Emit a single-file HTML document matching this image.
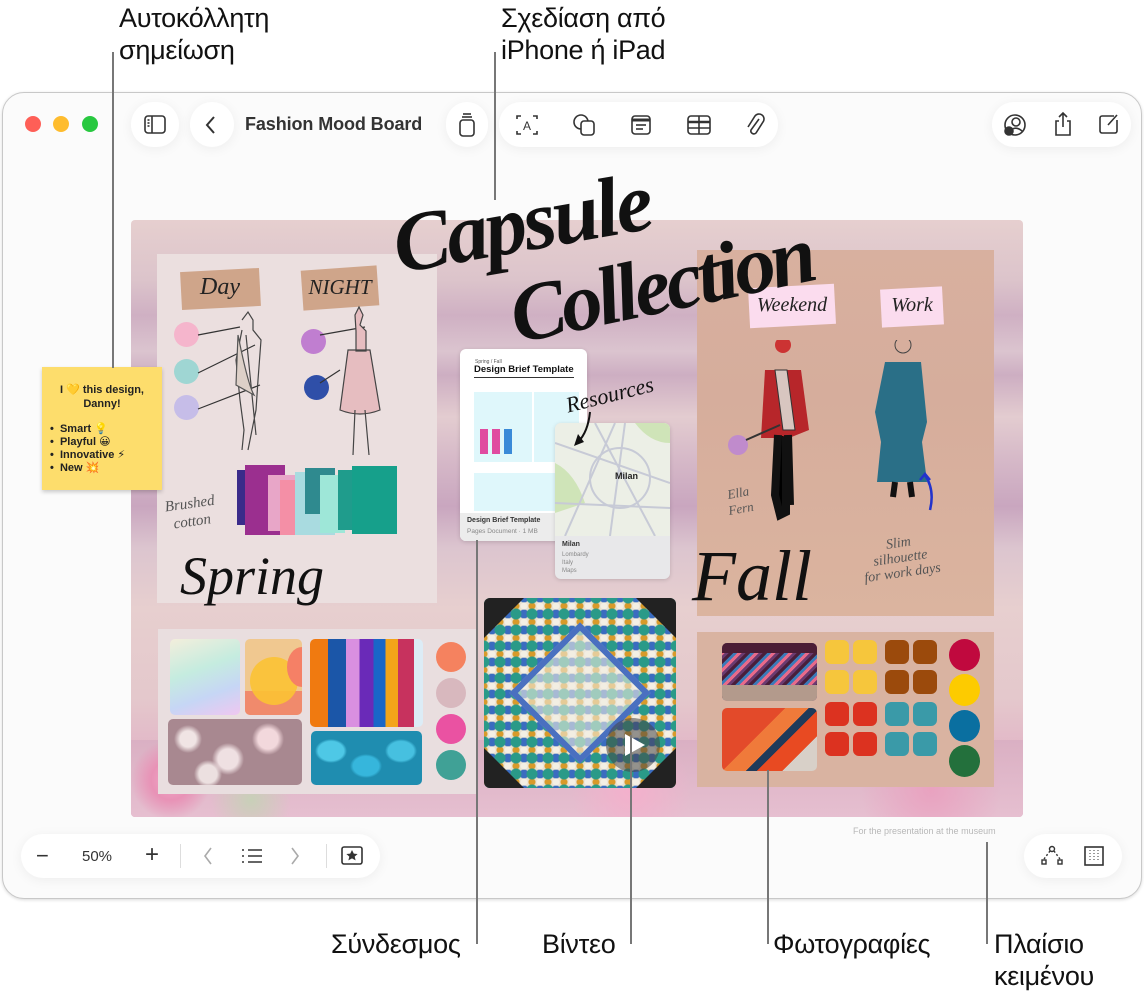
<!DOCTYPE html>
<html><head><meta charset="utf-8"><style>
*{margin:0;padding:0;box-sizing:border-box}
body{width:1144px;height:998px;background:#fff;position:relative;overflow:hidden;font-family:"Liberation Sans","DejaVu Sans",sans-serif}
.a{position:absolute}
.win{left:2px;top:92px;width:1140px;height:807px;border:1px solid #c8c8c8;border-radius:22px;background:#fbfbfb;box-shadow:0 1px 3px rgba(0,0,0,.15)}
.pill{position:absolute;background:#fff;border-radius:22px;box-shadow:0 2px 12px rgba(0,0,0,.06)}
.lbl{position:absolute;font-size:27px;color:#111;line-height:32px;white-space:nowrap;letter-spacing:-.3px}
.ln{position:absolute;background:#777;width:2px}
.hand{position:absolute;font-family:"Liberation Serif",serif;font-style:italic;font-weight:bold;color:#111;white-space:nowrap}
.c{position:absolute;border-radius:50%}
.tag{position:absolute;font-family:"Liberation Serif",serif;font-style:italic;color:#222;text-align:center}
</style></head><body>

<div class="lbl" style="left:119px;top:2px">Αυτοκόλλητη<br>σημείωση</div>
<div class="lbl" style="left:501px;top:2px">Σχεδίαση από<br>iPhone ή iPad</div>
<div class="lbl" style="left:331px;top:928px">Σύνδεσμος</div>
<div class="lbl" style="left:542px;top:928px">Βίντεο</div>
<div class="lbl" style="left:773px;top:928px">Φωτογραφίες</div>
<div class="lbl" style="left:994px;top:928px">Πλαίσιο<br>κειμένου</div>

<div class="a win"></div>

<div class="c" style="left:25px;top:116px;width:16px;height:16px;background:#fe5f57"></div>
<div class="c" style="left:53px;top:116px;width:16px;height:16px;background:#febc2e"></div>
<div class="c" style="left:82px;top:116px;width:16px;height:16px;background:#28c840"></div>

<div class="pill" style="left:131px;top:102px;width:48px;height:45px"></div>
<svg class="a" style="left:143px;top:114px" width="24" height="22" viewBox="0 0 24 22" fill="none" stroke="#333" stroke-width="1.6"><rect x="2" y="2" width="20" height="17" rx="3"/><line x1="9" y1="2" x2="9" y2="19"/><line x1="4.5" y1="6" x2="6.5" y2="6"/><line x1="4.5" y1="9" x2="6.5" y2="9"/><line x1="4.5" y1="12" x2="6.5" y2="12"/></svg>
<div class="pill" style="left:190px;top:102px;width:44px;height:45px"></div>
<svg class="a" style="left:204px;top:114px" width="14" height="22" fill="none" stroke="#333" stroke-width="2"><path d="M10 3 L3 11 L10 19"/></svg>
<div class="a" style="left:245px;top:114px;font-size:18px;color:#333;font-weight:bold;letter-spacing:-.1px">Fashion Mood Board</div>
<div class="pill" style="left:446px;top:102px;width:42px;height:45px"></div>
<svg class="a" style="left:457px;top:111px" width="20" height="28" fill="none" stroke="#333" stroke-width="1.6"><line x1="6" y1="3" x2="14" y2="3"/><line x1="5" y1="6" x2="15" y2="6"/><rect x="3" y="9" width="14" height="16" rx="3"/></svg>
<div class="pill" style="left:499px;top:102px;width:279px;height:45px"></div>
<svg class="a" style="left:514px;top:113px" width="26" height="24" fill="none" stroke="#333" stroke-width="1.6"><path d="M3 6V3h4M19 3h4v3M23 18v3h-4M7 21H3v-3"/><text x="13" y="17" font-size="12" text-anchor="middle" fill="#333" stroke="none" font-family="Liberation Sans">A</text></svg>
<svg class="a" style="left:571px;top:112px" width="26" height="26" fill="none" stroke="#333" stroke-width="1.6"><circle cx="10" cy="10" r="7"/><rect x="10" y="9" width="13" height="14" rx="3" fill="#fff"/></svg>
<svg class="a" style="left:629px;top:113px" width="24" height="24" fill="none" stroke="#333" stroke-width="1.6"><rect x="3" y="3" width="18" height="18" rx="3"/><line x1="3" y1="7" x2="21" y2="7" stroke-width="3"/><line x1="7" y1="12" x2="17" y2="12"/><line x1="7" y1="16" x2="14" y2="16"/></svg>
<svg class="a" style="left:686px;top:113px" width="26" height="24" fill="none" stroke="#333" stroke-width="1.6"><rect x="2" y="3" width="22" height="18" rx="3"/><line x1="2" y1="9" x2="24" y2="9" stroke-width="2.5"/><line x1="2" y1="15" x2="24" y2="15"/><line x1="13" y1="3" x2="13" y2="21"/></svg>
<svg class="a" style="left:744px;top:112px" width="22" height="26" fill="none" stroke="#333" stroke-width="1.6"><path d="M15 7 L7 18 a3 3 0 0 0 5 3 L19 10 a5 5 0 0 0-8-6 L4 15"/></svg>
<div class="pill" style="left:992px;top:102px;width:139px;height:45px"></div>
<svg class="a" style="left:1002px;top:112px" width="26" height="26" fill="none" stroke="#333" stroke-width="1.6"><circle cx="13" cy="13" r="10"/><circle cx="14" cy="10" r="4"/><path d="M7 20 q6-7 13-1"/><circle cx="7" cy="19" r="4" fill="#333"/></svg>
<svg class="a" style="left:1052px;top:110px" width="22" height="28" fill="none" stroke="#333" stroke-width="1.6"><path d="M7 11H4v14h14V11h-3M11 3v14M7 7l4-4 4 4"/></svg>
<svg class="a" style="left:1097px;top:112px" width="24" height="24" fill="none" stroke="#333" stroke-width="1.6"><path d="M17 4H5a2 2 0 0 0-2 2v13a2 2 0 0 0 2 2h13a2 2 0 0 0 2-2V8"/><path d="M20 3 L11 13"/></svg>

<div class="a" style="left:131px;top:220px;width:892px;height:597px;border-radius:4px;overflow:hidden;background:linear-gradient(180deg,#e6cfcf 0%,#dcc4cb 10%,#cfb0c3 16%,#dbc4cf 22%,#cdaec2 26%,#e3ccd0 33%,#d6b9c8 40%,#c9a6bf 48%,#dcc5cf 55%,#e7cfcf 65%,#e4c8cc 80%,#e2b5c7 90%,#d9a7be 100%)">
  <div class="a" style="left:0;top:520px;width:892px;height:77px;background:radial-gradient(circle at 40px 40px,#f3a8c8 0,#e892b6 20px,transparent 40px),radial-gradient(circle at 500px 50px,#f4b0cc 0,transparent 60px),radial-gradient(circle at 800px 50px,#e9a2c0 0,transparent 70px),radial-gradient(circle at 120px 60px,#c8d0b8 0,transparent 40px),linear-gradient(#dab0c3,#e6bfd0)"></div>
</div>

<div class="a" style="left:157px;top:254px;width:280px;height:349px;background:#ebdfdf"></div>
<div class="a" style="left:181px;top:270px;width:79px;height:38px;background:#cfa58a;transform:rotate(-3deg)"></div>
<div class="tag" style="left:185px;top:274px;width:70px;font-size:24px">Day</div>
<div class="a" style="left:302px;top:268px;width:76px;height:40px;background:#cfa58a;transform:rotate(-4deg)"></div>
<div class="tag" style="left:304px;top:275px;width:72px;font-size:21px">NIGHT</div>
<div class="c" style="left:174px;top:322px;width:25px;height:25px;background:#f5b5cc"></div>
<div class="c" style="left:174px;top:359px;width:25px;height:25px;background:#9fd6d3"></div>
<div class="c" style="left:174px;top:395px;width:25px;height:25px;background:#c6bde8"></div>
<div class="c" style="left:301px;top:329px;width:25px;height:25px;background:#c07ed0"></div>
<div class="c" style="left:304px;top:375px;width:25px;height:25px;background:#2f4fa8"></div>
<svg class="a" style="left:190px;top:305px" width="200" height="210" fill="none" stroke="#333" stroke-width="1.2">
 <path d="M8 30 L50 22 M8 68 L65 40 M8 104 L70 80 M130 30 L175 22 M130 78 L150 65"/>
 <path d="M52 15 l6-8 5 8 v10 l8 10 -3 40 -2 30 -8 40 M52 25 l-6 30 4 40 4 30 -2 20 M56 30 l10 100" stroke="#444"/>
 <path d="M48 30 q10 50 16 60 l-18-10z" fill="#ddd0c8" stroke="#555"/>
 <path d="M165 10 l4-8 4 8 -3 10 6 6 0 20 -10 0 0-20z M158 45 h22 l10 60 q-20 8 -40 0z" fill="#e6bdc0" stroke="#444"/>
 <path d="M165 105 l-2 45 M175 105 l4 45" stroke="#444"/>
</svg>
<div class="a" style="left:237px;top:470px;width:20px;height:55px;background:#3a2b8a"></div>
<div class="a" style="left:245px;top:465px;width:40px;height:70px;background:#9b2f8f"></div>
<div class="a" style="left:268px;top:475px;width:30px;height:56px;background:#e8a6c8"></div>
<div class="a" style="left:280px;top:480px;width:30px;height:55px;background:#f48fa6"></div>
<div class="a" style="left:295px;top:472px;width:40px;height:63px;background:#a9dbe0"></div>
<div class="a" style="left:305px;top:468px;width:30px;height:46px;background:#2f8a8f"></div>
<div class="a" style="left:320px;top:475px;width:25px;height:58px;background:#9ee7d8"></div>
<div class="a" style="left:338px;top:470px;width:30px;height:60px;background:#1f9c8c"></div>
<div class="a" style="left:352px;top:466px;width:45px;height:68px;background:#16a08b"></div>
<div class="tag" style="left:166px;top:495px;font-size:15px;line-height:18px;color:#555;transform:rotate(-8deg)">Brushed<br>cotton</div>
<div class="hand" style="left:180px;top:545px;font-size:54px;font-weight:normal">Spring</div>

<div class="a" style="left:697px;top:250px;width:297px;height:366px;background:linear-gradient(#d8b09f,#d6ad9c 40%,#dbb49f)"></div>
<div class="a" style="left:749px;top:286px;width:86px;height:40px;background:#fbdcee;transform:rotate(-3deg)"></div>
<div class="tag" style="left:749px;top:294px;width:86px;font-size:20px">Weekend</div>
<div class="a" style="left:881px;top:288px;width:62px;height:38px;background:#fbdcee;transform:rotate(-3deg)"></div>
<div class="tag" style="left:881px;top:294px;width:62px;font-size:20px">Work</div>
<svg class="a" style="left:720px;top:340px" width="240" height="200">
 <circle cx="63" cy="5" r="8" fill="#c33"/>
 <path d="M45 30 h36 l8 60 -20 8 h-28z" fill="#b7262a"/>
 <path d="M55 30 l12 0 8 60 -12 0z" fill="#d8c6c0" stroke="#333"/>
 <path d="M58 95 l-3 60 5 20 6-3 0-75 M68 95 l2 70" stroke="#111" stroke-width="8"/>
 <circle cx="18" cy="105" r="10" fill="#c08bcc"/><path d="M26 100 L60 85" stroke="#333" stroke-width="2"/>
 <circle cx="183" cy="5" r="8" fill="none" stroke="#444"/>
 <path d="M165 22 h36 l6 60 -5 20 5 40 h-50 l4-40 -6-30z" fill="#2a6f87"/>
 <path d="M175 142 l-2 15 M190 142 l2 15" stroke="#111" stroke-width="6"/>
 <path d="M210 170 q5-20 -5-35 M200 140 l5-6 5 6" stroke="#2233cc" stroke-width="2.5" fill="none"/>
</svg>
<div class="tag" style="left:727px;top:485px;font-size:13px;color:#555;transform:rotate(-10deg)">Ella<br>Fern</div>
<div class="tag" style="left:862px;top:536px;font-size:14px;line-height:15px;color:#555;transform:rotate(-8deg)">Slim<br>silhouette<br>for work days</div>
<div class="hand" style="left:692px;top:535px;font-size:72px;font-weight:normal">Fall</div>

<div class="hand" style="left:392px;top:175px;font-size:84px;transform:rotate(-10deg);letter-spacing:-3px">Capsule</div>
<div class="hand" style="left:508px;top:238px;font-size:82px;transform:rotate(-12deg);letter-spacing:-4px">Collection</div>

<div class="a" style="left:460px;top:349px;width:127px;height:192px;background:#fff;border-radius:6px;box-shadow:0 1px 4px rgba(0,0,0,.15);overflow:hidden">
 <div class="a" style="left:15px;top:10px;font-size:5px;color:#555">Spring / Fall</div>
 <div class="a" style="left:14px;top:15px;font-size:9.5px;font-weight:bold;color:#111;white-space:nowrap">Design Brief Template</div>
 <div class="a" style="left:14px;top:28px;width:100px;height:1px;background:#333"></div>
 <div class="a" style="left:14px;top:43px;width:58px;height:70px;background:#dff7fb"></div>
 <div class="a" style="left:74px;top:43px;width:45px;height:70px;background:#dff7fb"></div>
 <div class="a" style="left:20px;top:80px;width:8px;height:25px;background:#e04aa0"></div>
 <div class="a" style="left:32px;top:80px;width:8px;height:25px;background:#e04aa0"></div>
 <div class="a" style="left:44px;top:80px;width:8px;height:25px;background:#3a8ad8"></div>
 <div class="a" style="left:14px;top:124px;width:105px;height:38px;background:#dff7fb"></div>
 <div class="a" style="left:0;top:164px;width:127px;height:28px;background:#ececec"></div>
 <div class="a" style="left:7px;top:168px;font-size:7px;font-weight:bold;color:#333">Design Brief Template</div>
 <div class="a" style="left:7px;top:179px;font-size:6.5px;color:#888">Pages Document · 1 MB</div>
</div>
<div class="a" style="left:555px;top:423px;width:115px;height:156px;background:#e8e8ea;border-radius:6px;box-shadow:0 1px 4px rgba(0,0,0,.15);overflow:hidden">
 <svg class="a" style="left:0;top:0" width="115" height="113"><rect width="115" height="113" fill="#ecefe6"/><path d="M0 40 q20 10 30 40 l-30 10z M80 0 h35 v20 q-20 0-35-20z" fill="#cfe4b8"/><path d="M0 20 L115 60 M10 113 L60 0 M0 80 L115 85 M40 0 L100 113 M70 0 L55 113" stroke="#c7cad6" stroke-width="2"/><circle cx="65" cy="55" r="30" fill="none" stroke="#c7cad6" stroke-width="2"/></svg>
 <div class="a" style="left:60px;top:48px;font-size:9px;font-weight:bold;color:#222">Milan</div>
 <div class="a" style="left:7px;top:118px;font-size:7px;font-weight:bold;color:#333">Milan</div>
 <div class="a" style="left:7px;top:128px;font-size:6px;color:#888;line-height:8px">Lombardy<br>Italy<br>Maps</div>
</div>
<div class="tag" style="left:565px;top:382px;font-size:22px;transform:rotate(-14deg);color:#111">Resources</div>
<svg class="a" style="left:570px;top:410px" width="30" height="40"><path d="M20 2 q-2 20 -12 30" stroke="#111" stroke-width="2" fill="none"/><path d="M4 36 l4-12 6 8z" fill="#111"/></svg>

<div class="a" style="left:158px;top:629px;width:318px;height:165px;background:#e9dedf"></div>
<div class="a" style="left:170px;top:639px;width:70px;height:76px;border-radius:5px;background:linear-gradient(160deg,#f3eedc,#c5ecdf 40%,#c6d6f5 70%,#efc7f0)"></div>
<div class="a" style="left:245px;top:639px;width:57px;height:76px;border-radius:5px;background:#f0c890;overflow:hidden"><div class="a" style="left:0;top:52px;width:57px;height:24px;background:#f08a6c"></div><div class="c" style="left:5px;top:18px;width:48px;height:48px;background:#fbc234;opacity:.9"></div><div class="c" style="left:42px;top:8px;width:30px;height:40px;background:#f58066"></div></div>
<div class="a" style="left:310px;top:639px;width:113px;height:88px;border-radius:5px;background:linear-gradient(90deg,#f07a10 0 16%,#1b56a8 16% 32%,#d98fe0 32% 44%,#6a2ab8 44% 56%,#1a66c8 56% 67%,#f3a41a 67% 78%,#c7325e 78% 92%,#dcecf6 92%)"></div>
<div class="a" style="left:168px;top:719px;width:134px;height:66px;border-radius:5px;background:radial-gradient(circle at 20px 20px,#f0e4e4 8px,transparent 14px),radial-gradient(circle at 60px 40px,#efe0e2 10px,transparent 16px),radial-gradient(circle at 100px 20px,#f2d8dc 10px,transparent 16px),radial-gradient(circle at 40px 55px,#ece0e0 9px,transparent 14px),#a88890"></div>
<div class="a" style="left:311px;top:731px;width:111px;height:54px;border-radius:5px;background:radial-gradient(ellipse 16px 12px at 20px 20px,#4ec8e6 80%,transparent),radial-gradient(ellipse 16px 12px at 55px 35px,#36b6dc 80%,transparent),radial-gradient(ellipse 16px 12px at 90px 20px,#46c0e0 80%,transparent),#1f8db0"></div>
<div class="c" style="left:436px;top:642px;width:30px;height:30px;background:#f5825f"></div>
<div class="c" style="left:436px;top:678px;width:30px;height:30px;background:#d8b8be"></div>
<div class="c" style="left:436px;top:714px;width:30px;height:30px;background:#ea52a2"></div>
<div class="c" style="left:436px;top:750px;width:30px;height:30px;background:#40a196"></div>

<div class="a" style="left:484px;top:598px;width:192px;height:190px;border-radius:6px;overflow:hidden;background:radial-gradient(circle,#f4efe4 3px,transparent 4px) 0 0/16px 16px,radial-gradient(circle,#2a9a88 5px,transparent 6px) 8px 8px/16px 16px,radial-gradient(circle,#3a6cc0 4px,transparent 5px) 0 8px/16px 16px,radial-gradient(circle,#d89a2a 3px,transparent 4px) 8px 0/16px 16px,#e9e1cf">
 <div class="a" style="left:46px;top:45px;width:100px;height:100px;transform:rotate(45deg);border:6px solid #4a70c0;background:rgba(240,236,225,.6)"></div>
 <div class="a" style="left:0;top:0;width:40px;height:40px;background:#222;clip-path:polygon(0 0,100% 0,0 100%)"></div>
 <div class="a" style="left:152px;top:0;width:40px;height:40px;background:#222;clip-path:polygon(0 0,100% 0,100% 100%)"></div>
 <div class="a" style="left:0;top:150px;width:40px;height:40px;background:#222;clip-path:polygon(0 0,0 100%,100% 100%)"></div>
 <div class="a" style="left:152px;top:150px;width:40px;height:40px;background:#222;clip-path:polygon(100% 0,0 100%,100% 100%)"></div>
 <div class="c" style="left:122px;top:120px;width:54px;height:54px;background:rgba(70,70,70,.55)"></div>
 <div class="a" style="left:141px;top:136px;width:0;height:0;border-left:20px solid #fff;border-top:11px solid transparent;border-bottom:11px solid transparent"></div>
</div>

<div class="a" style="left:697px;top:632px;width:297px;height:155px;background:#d9b3a1"></div>
<div class="a" style="left:722px;top:643px;width:95px;height:58px;border-radius:5px;background:repeating-linear-gradient(135deg,#4a1e3a 0 3px,#3a7ab8 3px 6px,#e86a8a 6px 9px,#6a3a70 9px 12px);overflow:hidden"><div class="a" style="left:0;top:0;width:95px;height:10px;background:#4b1d36"></div><div class="a" style="left:0;top:42px;width:95px;height:16px;background:#b39a8c"></div></div>
<div class="a" style="left:722px;top:708px;width:95px;height:63px;border-radius:5px;background:linear-gradient(135deg,#e34a2a 0 40%,#f07a3a 40% 55%,#1f3a5a 55% 62%,#e84a22 62% 78%,#d8d0c8 78%)"></div>
<svg class="a" style="left:825px;top:640px" width="120" height="120">
 <g fill="#f6c63c"><rect x="0" y="0" width="24" height="24" rx="6"/><rect x="28" y="0" width="24" height="24" rx="6"/><rect x="0" y="30" width="24" height="24" rx="6"/><rect x="28" y="30" width="24" height="24" rx="6"/></g>
 <g fill="#9b4a0c"><rect x="60" y="0" width="24" height="24" rx="6"/><rect x="88" y="0" width="24" height="24" rx="6"/><rect x="60" y="30" width="24" height="24" rx="6"/><rect x="88" y="30" width="24" height="24" rx="6"/></g>
 <g fill="#dc3220"><rect x="0" y="62" width="24" height="24" rx="6"/><rect x="28" y="62" width="24" height="24" rx="6"/><rect x="0" y="92" width="24" height="24" rx="6"/><rect x="28" y="92" width="24" height="24" rx="6"/></g>
 <g fill="#3a9aa8"><rect x="60" y="62" width="24" height="24" rx="6"/><rect x="88" y="62" width="24" height="24" rx="6"/><rect x="60" y="92" width="24" height="24" rx="6"/><rect x="88" y="92" width="24" height="24" rx="6"/></g>
</svg>
<div class="c" style="left:949px;top:639px;width:31px;height:32px;background:#c0093e"></div>
<div class="c" style="left:949px;top:674px;width:31px;height:32px;background:#fdcb00"></div>
<div class="c" style="left:949px;top:710px;width:31px;height:32px;background:#0a6fa0"></div>
<div class="c" style="left:949px;top:745px;width:31px;height:32px;background:#23703c"></div>

<div class="a" style="left:42px;top:367px;width:120px;height:123px;background:#fddd6c;box-shadow:0 2px 4px rgba(0,0,0,.2)"></div>
<div class="a" style="left:42px;top:383px;width:120px;text-align:center;font-size:11px;font-weight:bold;color:#222;line-height:14px">I 💛 this design,<br>Danny!</div>
<div class="a" style="left:50px;top:423px;font-size:11px;font-weight:bold;color:#222;line-height:13px">• &nbsp;Smart 💡<br>• &nbsp;Playful 😀<br>• &nbsp;Innovative ⚡<br>• &nbsp;New 💥</div>

<div class="a" style="left:853px;top:826px;font-size:9px;color:#b8b8b8">For the presentation at the museum</div>

<div class="pill" style="left:21px;top:834px;width:359px;height:44px"></div>
<div class="a" style="left:36px;top:845px;font-size:22px;color:#333;line-height:22px">−</div>
<div class="a" style="left:82px;top:848px;font-size:15px;color:#333">50%</div>
<div class="a" style="left:145px;top:843px;font-size:24px;color:#333;line-height:24px">+</div>
<div class="a" style="left:180px;top:844px;width:1px;height:24px;background:#ddd"></div>
<svg class="a" style="left:202px;top:846px" width="12" height="20" fill="none" stroke="#aaa" stroke-width="1.6"><path d="M9 2L3 10l6 8"/></svg>
<svg class="a" style="left:241px;top:848px" width="22" height="16" fill="none" stroke="#333" stroke-width="1.6"><path d="M7 2h14M7 8h14M7 14h14M1 2h2M1 8h2M1 14h2"/></svg>
<svg class="a" style="left:289px;top:846px" width="12" height="20" fill="none" stroke="#aaa" stroke-width="1.6"><path d="M3 2l6 8-6 8"/></svg>
<div class="a" style="left:326px;top:844px;width:1px;height:24px;background:#ddd"></div>
<svg class="a" style="left:340px;top:845px" width="24" height="22" fill="none" stroke="#333" stroke-width="1.6"><rect x="2" y="2" width="20" height="17" rx="2"/><path d="M12 5l1.8 3.6 3.8.4-2.9 2.6.9 3.8L12 13.4 8.4 15.4l.9-3.8L6.4 9l3.8-.4z" fill="#333" stroke="none"/></svg>
<div class="pill" style="left:1024px;top:834px;width:98px;height:44px"></div>
<svg class="a" style="left:1040px;top:845px" width="24" height="22" fill="none" stroke="#333" stroke-width="1.4"><circle cx="12" cy="4" r="2.5"/><rect x="2" y="15" width="4" height="4"/><rect x="18" y="15" width="4" height="4"/><path d="M10 6 L4 14M14 6l6 8" stroke-dasharray="2 2"/></svg>
<svg class="a" style="left:1083px;top:845px" width="22" height="22" fill="none" stroke="#333" stroke-width="1.6"><rect x="2" y="2" width="18" height="18"/><path d="M7 5v12M11 5v12M15 5v12" stroke-dasharray="1 2" stroke-width="1"/></svg>

<div class="ln" style="left:112px;top:52px;height:316px"></div>
<div class="ln" style="left:494px;top:52px;height:148px"></div>
<div class="ln" style="left:476px;top:540px;height:404px"></div>
<div class="ln" style="left:630px;top:735px;height:209px"></div>
<div class="ln" style="left:767px;top:770px;height:174px"></div>
<div class="ln" style="left:986px;top:842px;height:102px"></div>

</body></html>
